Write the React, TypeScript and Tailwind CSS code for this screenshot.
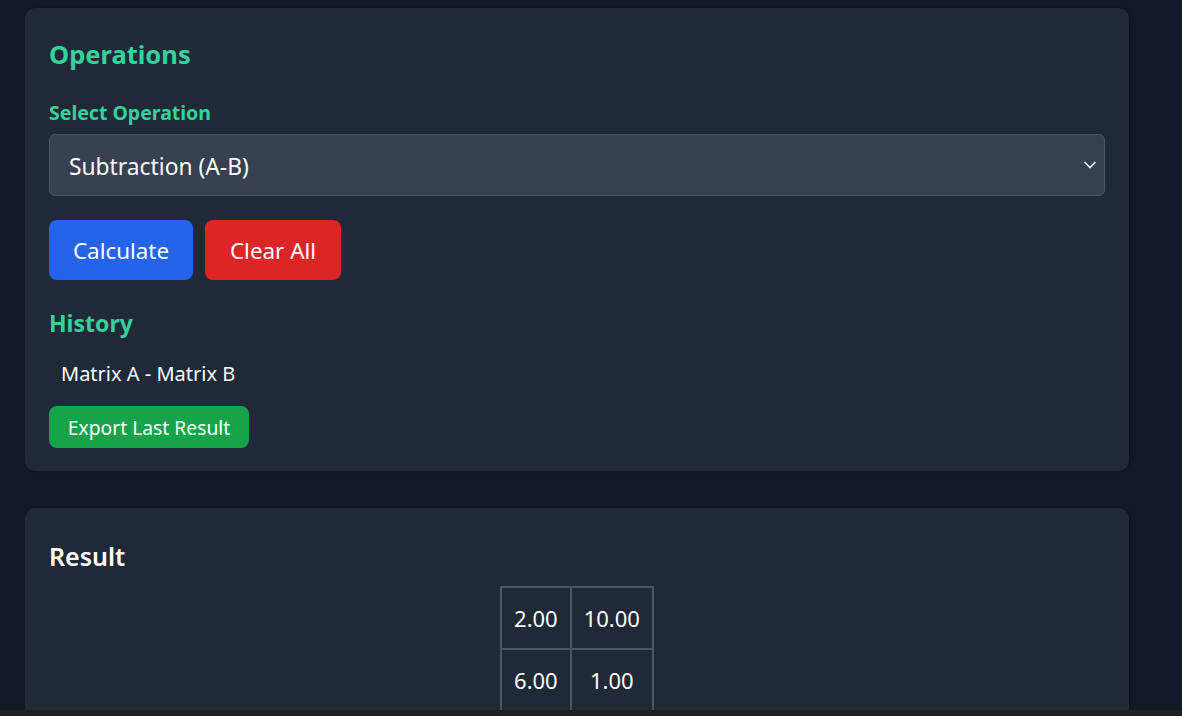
import { useState } from 'react';

const font = { fontFamily: '"Noto Sans", "Open Sans", sans-serif' };

const result = [
  ['2.00', '10.00'],
  ['6.00', '1.00']
];

function Chevron() {
  return (
    <svg width="14" height="9" viewBox="0 0 14 9" fill="none" className="pointer-events-none absolute right-[8px] top-1/2 -translate-y-1/2">
      <path d="M1.5 1.5 L7 7 L12.5 1.5" stroke="#e5e7eb" strokeWidth="1.6" />
    </svg>
  );
}

export default function App() {
  const [op, setOp] = useState('sub');

  return (
    <div className="flex h-[716px] flex-col overflow-hidden bg-[#111827] text-white" style={font}>
      <div className="flex h-[710px] flex-col gap-[37px] overflow-hidden pl-[25px] pr-[53px] pt-[8px]">
        <section className="rounded-[10px] bg-[#1f2937] px-[24px] pb-[23px] pt-[28px] shadow-[1px_0_2px_rgba(0,0,0,0.35)]">
          <h2 className="text-[25.5px] font-bold leading-[36px] text-[#34d399]">Operations</h2>

          <label className="mt-[28px] block text-[19.5px] font-bold leading-[26px] text-[#34d399]">Select Operation</label>
          <div className="relative mt-[8px]">
            <select
              value={op}
              onChange={(e) => setOp(e.target.value)}
              className="h-[62px] w-full appearance-none rounded-[6px] border border-[#4b5563] bg-[#374151] px-[19px] pt-[4px] text-[22.8px] text-white outline-none"
            >
              <option value="add">Addition (A+B)</option>
              <option value="sub">Subtraction (A-B)</option>
              <option value="mul">Multiplication (A×B)</option>
            </select>
            <Chevron />
          </div>

          <div className="mt-[24px] flex gap-[12px]">
            <button className="h-[60px] w-[144px] rounded-[8px] bg-[#2563eb] pt-[2px] text-[22.4px] text-white">Calculate</button>
            <button className="h-[60px] w-[136px] rounded-[8px] bg-[#dc2626] pt-[2px] text-[22.4px] text-white">Clear All</button>
          </div>

          <h3 className="mt-[28px] text-[23px] font-bold leading-[30px] text-[#34d399]">History</h3>
          <ul className="mt-[14px]">
            <li className="px-[12px] py-[8px] text-[20px] leading-[28px]">Matrix A - Matrix B</li>
          </ul>
          <button className="mt-[10px] h-[42px] w-[200px] rounded-[8px] bg-[#16a34a] pt-[2px] text-[19.3px] text-white">Export Last Result</button>
        </section>

        <section className="rounded-[10px] bg-[#1f2937] px-[24px] pt-[30px] shadow-[1px_0_2px_rgba(0,0,0,0.35)]">
          <h2 className="text-[25px] font-semibold leading-[36px]">Result</h2>
          <div className="mt-[12px] flex justify-center">
            <table className="border-collapse">
              <tbody>
                {result.map((row, i) => (
                  <tr key={i}>
                    {row.map((v, j) => (
                      <td key={j} className="h-[62px] border-2 border-[#4b5563] px-[12px] text-center text-[22px]">
                        {v}
                      </td>
                    ))}
                  </tr>
                ))}
              </tbody>
            </table>
          </div>
          <div className="h-[40px]" />
        </section>
      </div>
      <div className="h-[6px] bg-[#202020]" />
    </div>
  );
}
